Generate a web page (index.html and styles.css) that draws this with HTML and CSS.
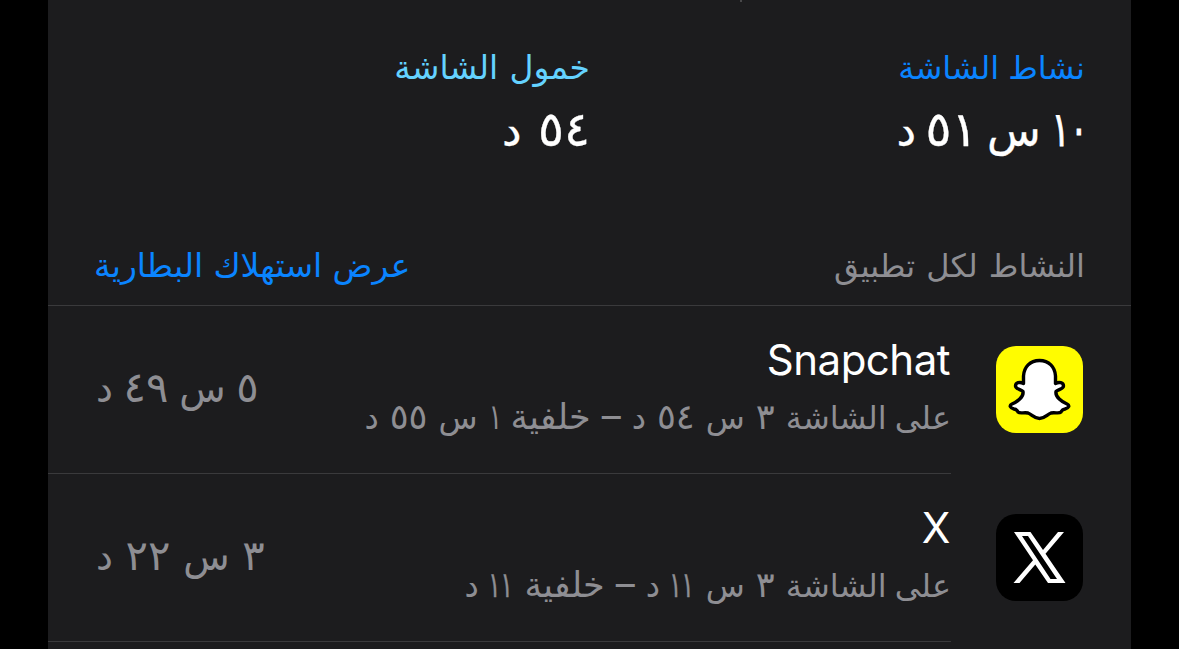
FILE: index.html
```
<!DOCTYPE html>
<html lang="ar" dir="rtl">
<head>
  <meta charset="UTF-8" />
  <title>البطارية</title>
  <meta name="viewport" content="width=device-width, initial-scale=1.0" />
  <link rel="stylesheet" href="styles.css">
</head>
<body>

  <main class="card">
    <span class="tick"></span>

    <!-- Totals -->
    <section class="totals">
      <div class="total">
        <div class="total-label active">نشاط الشاشة</div>
        <div class="total-value"><span class="num ten">١٠</span> س <span class="num fifty-one">٥١</span> د</div>
      </div>
      <div class="total">
        <div class="total-label idle">خمول الشاشة</div>
        <div class="total-value wide"><span class="num">٥٤</span> د</div>
      </div>
    </section>

    <!-- List header -->
    <div class="list-header">
      <span>النشاط لكل تطبيق</span>
      <a>عرض استهلاك البطارية</a>
    </div>

    <!-- Apps -->
    <div class="app">
      <svg class="app-icon" viewBox="0 0 87 87">
        <rect width="87" height="87" rx="20" fill="#fffc00" />
        <path d="M43.500 14.500C34 14.500 28 21 27.500 30V37.500C24 35.500 19.500 36.500 19.500 40C19.500 43 25 43.500 27 45.500C28 51 21 56 16 58C13 59.500 14 62 18 63C21 63.500 21 64 22 66C24 68 28 66 32 67C36 68.500 38 72.500 43.500 72.500C49 72.500 51 68.500 55 67C59 66 63 68 65 66C66 64 66 63.500 69 63C73 62 74 59.500 71 58C66 56 59 51 60 45.500C62 43.500 67.500 43 67.500 40C67.500 36.500 63 35.500 59.500 37.500V30C59 21 53 14.500 43.500 14.500Z" fill="#fff" stroke="#000" stroke-width="3.400" stroke-linejoin="round" />
      </svg>
      <div class="app-body">
        <div class="app-text">
          <div class="app-name">Snapchat</div>
          <div class="app-detail"><span class="lead">على</span> الشاشة <span class="num">٣</span> س <span class="num">٥٤</span> د <span class="dash">–</span> <span class="background">خلفية</span> <span class="num single">١</span> س <span class="num">٥٥</span> د</div>
        </div>
        <div class="app-time"><span class="num">٥</span> س <span class="num">٤٩</span> د</div>
      </div>
    </div>
    <div class="app">
      <svg class="app-icon" viewBox="0 0 87 87">
        <rect width="87" height="87" rx="20" fill="#000" />
        <path fill="#fff" fill-rule="evenodd" d="M18 18H34.500L47 36L62 18H68L49.500 39.700L69.500 69H52L39.300 50.500L23.500 69H17.500L37 46.200ZM26 22L54.500 65H61L32 22Z" />
      </svg>
      <div class="app-body">
        <div class="app-text">
          <div class="app-name">X</div>
          <div class="app-detail"><span class="lead">على</span> الشاشة <span class="num">٣</span> س <span class="num eleven">١١</span> د <span class="dash">–</span> <span class="background">خلفية</span> <span class="num eleven">١١</span> د</div>
        </div>
        <div class="app-time wide"><span class="num">٣</span> س <span class="num">٢٢</span> د</div>
      </div>
    </div>
  </main>

</body>
</html>
```

FILE: styles.css
```
* {
  box-sizing: border-box;
}

body {
  margin: 0;
  height: 649px;
  overflow: hidden;
  background: #000;
  color: #fff;
  font-family: Inter, "DejaVu Sans", sans-serif;
}

.card {
  position: relative;
  height: 649px;
  margin: 0 48px;
  background: #1c1c1e;
}

.tick {
  position: absolute;
  top: 0;
  left: 692px;
  width: 2px;
  height: 2px;
  background: #48484a;
}

.num {
  display: inline-block;
  font-size: 1.1em;
  line-height: 1;
}

.totals {
  display: grid;
  grid-template-columns: 495px 1fr;
  height: 220px;
  padding: 46px 46px 0;
  white-space: nowrap;
}

.total-label {
  height: 44px;
  font-size: 32px;
  line-height: 44px;
}

.active {
  color: #0a84ff;
}

.idle {
  color: #64d2ff;
  font-size: 33px;
  line-height: 42px;
  word-spacing: 2px;
}

.total-value {
  height: 80px;
  font-size: 44px;
  line-height: 80px;
  -webkit-text-stroke: 0.3px #fff;
}

.total-value.wide {
  word-spacing: 4px;
}

/* the digit one is narrow, so squeeze the numbers that hold it */
.total-value .ten {
  margin-right: -3px;
  margin-left: -17px;
  transform: scaleX(0.7);
  transform-origin: right;
  -webkit-text-stroke: 1px #fff;
}

.total-value .fifty-one {
  margin-right: -3px;
  margin-left: -3px;
}

.list-header {
  display: flex;
  justify-content: space-between;
  height: 86px;
  padding: 24px 46px 0;
  border-bottom: 1px solid #3a3a3c;
  color: #8e8e93;
  font-size: 32px;
  line-height: 44px;
  word-spacing: 2px;
}

.list-header a {
  color: #0a84ff;
  font-size: 33px;
  line-height: 42px;
  word-spacing: 1px;
}

.app {
  display: flex;
  align-items: center;
  height: 168px;
  padding-right: 48px;
}

.app-icon {
  width: 87px;
  height: 87px;
  margin-bottom: 2px;
  margin-left: 45px;
}

.app-body {
  display: flex;
  flex: 1;
  align-items: center;
  justify-content: space-between;
  height: 168px;
  padding-left: 48px;
  border-bottom: 1px solid #3a3a3c;
  white-space: nowrap;
}

.app-name {
  height: 56px;
  padding-right: 1px;
  font-size: 42px;
  letter-spacing: -0.5px;
  line-height: 52px;
}

.app-detail {
  height: 56px;
  color: #8e8e93;
  font-size: 32px;
  line-height: 56px;
  word-spacing: 2px;
}

.lead {
  margin-left: -3px;
}

.dash {
  font-size: 38px;
  line-height: 1;
}

.background {
  font-size: 35px;
  line-height: 1;
}

.single {
  margin-right: -5px;
  margin-left: -3px;
  transform: scaleX(0.7);
}

.eleven {
  margin-right: 1px;
  margin-left: -15px;
  transform: scaleX(0.65);
  transform-origin: right;
  -webkit-text-stroke: 0.5px #8e8e93;
}

.app-time {
  padding-bottom: 4px;
  color: #8e8e93;
  font-size: 38px;
}

.app-time.wide {
  word-spacing: 2px;
}
```
